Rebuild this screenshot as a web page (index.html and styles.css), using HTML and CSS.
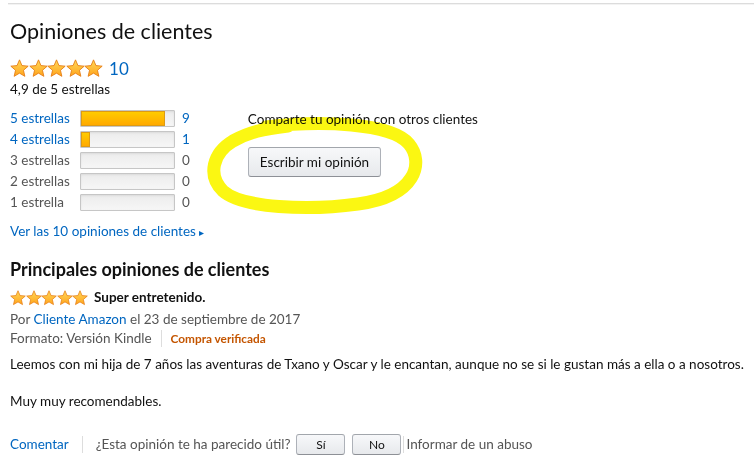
FILE: index.html
```html
<!DOCTYPE html>
<html>
<head>
    <title>Opiniones de clientes</title>
    <link rel="stylesheet" href="styles.css">
</head>
<body>
    <svg width="0" height="0" class="defs">
        <defs>
            <linearGradient id="starFill" x1="0" y1="0" x2="0" y2="1">
                <stop offset="0" stop-color="#ffd85a"/>
                <stop offset="1" stop-color="#ffa41c"/>
            </linearGradient>
            <symbol id="star" viewBox="0 0 20 20">
                <path d="M10 0.9 L12.59 6.94 L19.13 7.53 L14.18 11.86 L15.64 18.27 L10 14.9 L4.36 18.27 L5.82 11.86 L0.87 7.53 L7.41 6.94 Z"
                      fill="url(#starFill)" stroke="#e47911" stroke-width="0.9" stroke-linejoin="round"/>
            </symbol>
        </defs>
    </svg>

    <div class="wrap">
        <div class="rule"></div>
        <div class="content">
            <h1 class="title">Opiniones de clientes</h1>

            <div class="summary">
                <span class="stars big">
                    <svg><use href="#star"/></svg><svg><use href="#star"/></svg><svg><use href="#star"/></svg><svg><use href="#star"/></svg><svg><use href="#star"/></svg>
                </span>
                <a class="total" href="#">10</a>
            </div>
            <div class="average">4,9 de 5 estrellas</div>

            <div class="hist-block">
                <table class="histogram">
                    <tr>
                        <td class="label"><a href="#">5 estrellas</a></td>
                        <td><div class="bar"><div class="fill" style="width: 90%"></div></div></td>
                        <td class="count"><a href="#">9</a></td>
                    </tr>
                    <tr>
                        <td class="label"><a href="#">4 estrellas</a></td>
                        <td><div class="bar"><div class="fill" style="width: 10%"></div></div></td>
                        <td class="count"><a href="#">1</a></td>
                    </tr>
                    <tr class="empty">
                        <td class="label">3 estrellas</td>
                        <td><div class="bar"></div></td>
                        <td class="count">0</td>
                    </tr>
                    <tr class="empty">
                        <td class="label">2 estrellas</td>
                        <td><div class="bar"></div></td>
                        <td class="count">0</td>
                    </tr>
                    <tr class="empty">
                        <td class="label">1 estrella</td>
                        <td><div class="bar"></div></td>
                        <td class="count">0</td>
                    </tr>
                </table>

                <div class="share">
                    <div class="share-text">Comparte tu opinión con otros clientes</div>
                    <button class="btn write">Escribir mi opinión</button>
                </div>
            </div>

            <a class="see-all" href="#">Ver las 10 opiniones de clientes <span class="caret">&#9656;</span></a>

            <h2 class="top-title">Principales opiniones de clientes</h2>

            <div class="review">
                <div class="review-head">
                    <span class="stars small">
                        <svg><use href="#star"/></svg><svg><use href="#star"/></svg><svg><use href="#star"/></svg><svg><use href="#star"/></svg><svg><use href="#star"/></svg>
                    </span>
                    <span class="review-title">Super entretenido.</span>
                </div>
                <div class="byline">Por <a href="#">Cliente Amazon</a> el 23 de septiembre de 2017</div>
                <div class="format">
                    <span>Formato: Versión Kindle</span>
                    <span class="sep"></span>
                    <span class="verified">Compra verificada</span>
                </div>
                <p class="body-text">Leemos con mi hija de 7 años las aventuras de Txano y Oscar y le encantan, aunque no se si le gustan más a ella o a nosotros.</p>
                <p class="body-text">Muy muy recomendables.</p>

                <div class="actions">
                    <a href="#">Comentar</a>
                    <span class="sep"></span>
                    <span class="question">¿Esta opinión te ha parecido útil?</span>
                    <button class="btn vote">Sí</button>
                    <button class="btn vote">No</button>
                    <span class="sep tight"></span>
                    <span class="report">Informar de un abuso</span>
                </div>
            </div>

            <!-- yellow marker circle drawn over the write-review button -->
            <svg class="marker" width="240" height="120" viewBox="200 105 240 120">
                <path d="M268 127 C322 120 394 123 411 144 C426 162 419 196 360 204 C310 211 244 208 225 191 C209 175 215 153 235 141 C251 132 265 129 290 126"
                      fill="none" stroke="#fbf712" stroke-width="13" stroke-linecap="round" stroke-linejoin="round"/>
            </svg>
        </div>
    </div>
</body>
</html>
```

FILE: styles.css
```css
body {
    margin: 0;
    background: #fff;
    color: #111;
    font-family: Lato, "Noto Sans", Arial, sans-serif;
    font-size: 13.5px;
    line-height: 19px;
}
a {
    color: #0066c0;
    text-decoration: none;
}
.defs {
    position: absolute;
}
.wrap {
    padding: 3px 1px 0 8px;
}
.rule {
    height: 1px;
    background: #dcdcdc;
    box-shadow: 0 1px 0 #f3f3f3;
}
.content {
    position: relative;
    padding: 13px 0 0 2px;
}
.title {
    margin: 0;
    font-size: 21.5px;
    line-height: 28px;
    font-weight: 400;
}
.summary {
    display: flex;
    align-items: center;
    margin-top: 12px;
    height: 22px;
}
.stars {
    display: inline-flex;
}
.stars.big svg {
    width: 19px;
    height: 19px;
    margin-right: -0.4px;
}
.stars.small svg {
    width: 16px;
    height: 16px;
    margin-right: -0.4px;
}
.total {
    font-size: 17px;
    margin-left: 6px;
}
.average {
    margin-top: 1px;
}
.hist-block {
    display: flex;
    margin-top: 9px;
}
.histogram {
    border-collapse: collapse;
}
.histogram td {
    padding: 0;
    height: 21px;
}
.histogram .label {
    width: 70px;
}
.histogram .empty {
    color: #555;
}
.bar {
    width: 93px;
    height: 15px;
    border: 1px solid #c6c6c6;
    border-radius: 1px;
    background: linear-gradient(#ececec, #f6f6f6);
    box-shadow: inset 0 1px 2px rgba(0, 0, 0, 0.08);
}
.fill {
    height: 100%;
    background: linear-gradient(#ffce00, #ffa700);
    box-shadow: inset 0 0 0 1px #dd9b14;
}
.histogram .count {
    padding-left: 7px;
}
.share {
    margin-left: 58px;
    padding-top: 2px;
}
.btn {
    font-family: inherit;
    color: #111;
    border: 1px solid #adb1b8;
    border-top-color: #a2a6ac;
    border-bottom-color: #8d9096;
    border-radius: 3px;
    background: linear-gradient(#f7f8fa, #e7e9ec);
    cursor: pointer;
}
.write {
    margin-top: 18px;
    height: 30px;
    padding: 0 11px;
    font-size: 13.5px;
}
.see-all {
    display: inline-block;
    margin-top: 9px;
}
.caret {
    font-size: 10px;
}
.top-title {
    margin: 15px 0 0;
    font-size: 18px;
    line-height: 24px;
    font-weight: 700;
}
.review-head {
    display: flex;
    align-items: center;
    margin-top: 7px;
    height: 19px;
}
.review-title {
    font-weight: 700;
    margin-left: 6px;
}
.byline,
.format {
    color: #555;
}
.byline {
    margin-top: 3px;
}
.format {
    display: flex;
    align-items: center;
}
.sep {
    display: inline-block;
    width: 1px;
    height: 17px;
    background: #ddd;
    margin: 0 9px;
}
.verified {
    color: #c45500;
    font-size: 11.8px;
    font-weight: 700;
}
.body-text {
    margin: 7px 0 0;
}
.body-text + .body-text {
    margin-top: 18px;
}
.actions {
    display: flex;
    align-items: center;
    margin-top: 23px;
    color: #555;
}
.actions .sep {
    margin: 0 13px;
}
.actions .sep.tight {
    margin: 0 2px 0 2px;
}
.vote {
    width: 49px;
    height: 21px;
    font-size: 12px;
    margin-left: 6px;
    padding: 0;
}
.vote + .vote {
    margin-left: 7px;
}
.marker {
    position: absolute;
    left: 190px;
    top: 101px;
    mix-blend-mode: multiply;
    pointer-events: none;
}
```
